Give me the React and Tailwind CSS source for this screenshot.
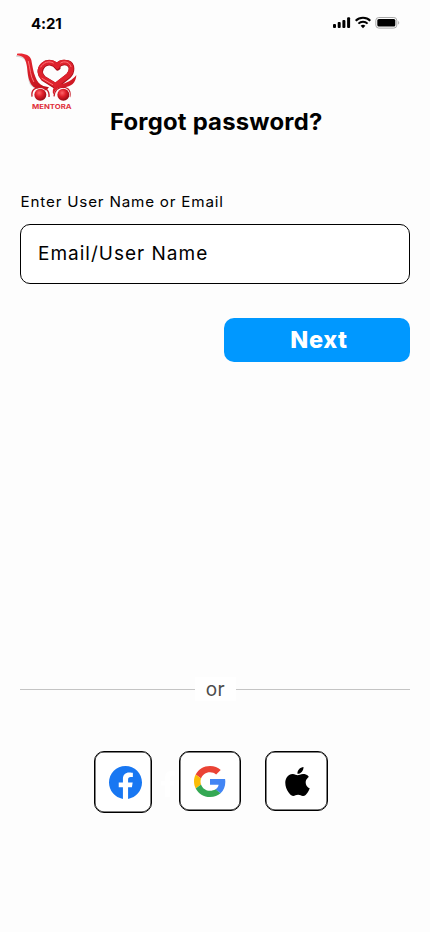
function Logo() {
  return (
    <svg viewBox="48 36 186 180" className="h-[60px] w-[62px] shrink-0" fill="none">
      <defs>
        <linearGradient id="red" x1="0" y1="0" x2="1" y2="1">
          <stop offset="0" stopColor="#ef2b35" />
          <stop offset="1" stopColor="#b90d18" />
        </linearGradient>
        <radialGradient id="wheel" cx=".4" cy=".35" r=".7">
          <stop offset="0" stopColor="#ff6468" />
          <stop offset=".45" stopColor="#df1f29" />
          <stop offset="1" stopColor="#8f0711" />
        </radialGradient>
      </defs>
      <path d="M51 42C70 41 86 44 90 57C95 78 90 92 100 110C108 124 116 131 128 139L145 143L139 149C116 145 96 141 91 126C84 107 88 87 82 66C78 52 67 47 51 46Z" fill="#8e8585" opacity=".3" transform="translate(-3 4)" />
      <path d="M51 41C72 39 90 45 94 60C98 80 99 94 106 110C111 124 118 132 130 138L147 142L139 151C112 149 96 143 90 126C81 107 84 87 78 67C75 53 67 48 51 46Z" fill="url(#red)" />
      <path d="M173 83C163 66 142 64 130 75C116 89 120 105 130 115L167 138L205 108C218 95 218 75 203 69C189 65 179 69 171 78" stroke="#a90d19" strokeWidth="17" strokeLinecap="round" strokeLinejoin="round" />
      <path d="M172 80C162 65 141 63 129 74C115 87 119 103 129 114L166 136L205 106C217 94 217 74 202 68C189 64 179 68 171 77" stroke="#de222d" strokeWidth="14" strokeLinecap="round" strokeLinejoin="round" />
      <path d="M160 69C147 61 130 67 122 81M182 69C193 61 210 67 213 80M85 64C91 87 91 109 101 125M126 115L158 134" stroke="#ff7479" strokeWidth="3" strokeLinecap="round" />
      <path d="M229 105C228 128 214 141 190 142C174 141 166 148 160 164C155 148 162 137 178 133C201 130 216 121 229 105Z" fill="url(#red)" />
      <path d="M96 170C93 150 105 142 120 142C137 142 149 151 147 171M162 169C164 149 175 142 190 142C206 143 213 153 209 171" stroke="#c71925" strokeWidth="4" />
      <circle cx="121" cy="164" r="20" fill="white" />
      <circle cx="190" cy="164" r="20" fill="white" />
      <circle cx="121" cy="164" r="18" fill="url(#wheel)" />
      <circle cx="190" cy="164" r="18" fill="url(#wheel)" />
      <text x="96" y="207" textLength="119" lengthAdjust="spacingAndGlyphs" fill="#e0303b" fontSize="20" fontWeight="700" fontFamily="Inter, sans-serif">MENTORA</text>
    </svg>
  );
}

function StatusIcons() {
  return (
    <svg viewBox="0 0 68 14" className="-mt-px h-[14px] w-[68px]">
      <rect x="0" y="8" width="3" height="4" rx="1" />
      <rect x="4.7" y="6" width="3" height="6" rx="1" />
      <rect x="9.4" y="4" width="3" height="8" rx="1" />
      <rect x="14.1" y="1.3" width="3" height="10.7" rx="1" />
      <g fill="none" stroke="black" strokeWidth="2">
        <path d="M22.7 4.8C26.7 .8 33.3 .8 37.3 4.8" />
        <path d="M25.4 7.6C28 5.1 32 5.1 34.6 7.6" />
      </g>
      <path d="M27.6 9.8Q30 7.8 32.4 9.8L30 12.2Z" />
      <rect x="42.8" y="1.5" width="21" height="10.6" rx="3" fill="none" stroke="#a8a8a8" />
      <rect x="44.3" y="3" width="18" height="7.6" rx="1.5" />
      <path d="M65.2 5v3.6c1.4-.5 1.4-3.1 0-3.6Z" fill="#a8a8a8" />
    </svg>
  );
}

function Facebook() {
  return (
    <svg viewBox="0 0 24 24" className="ml-[4px] h-[33px] w-[33px]" fill="#1877f2">
      <path d="M24 12.073c0-6.627-5.373-12-12-12s-12 5.373-12 12c0 5.99 4.388 10.954 10.125 11.854v-8.385H7.078v-3.47h3.047V9.43c0-3.007 1.792-4.669 4.533-4.669 1.312 0 2.686.235 2.686.235v2.953H15.83c-1.491 0-1.956.925-1.956 1.874v2.25h3.328l-.532 3.47h-2.796v8.385C19.612 23.027 24 18.062 24 12.073z" />
    </svg>
  );
}

function Google() {
  return (
    <svg viewBox="0 0 48 48" preserveAspectRatio="none" className="h-[31px] w-[32px]">
      <path fill="#EA4335" d="M24 9.5c3.54 0 6.71 1.22 9.21 3.6l6.85-6.85C35.9 2.38 30.47 0 24 0 14.62 0 6.51 5.38 2.56 13.22l7.98 6.19C12.43 13.72 17.74 9.5 24 9.5z" />
      <path fill="#4285F4" d="M46.98 24.55c0-1.57-.15-3.09-.38-4.55H24v9.02h12.94c-.58 2.96-2.26 5.48-4.78 7.18l7.73 6c4.51-4.18 7.09-10.36 7.09-17.65z" />
      <path fill="#FBBC05" d="M10.53 28.59c-.48-1.45-.76-2.99-.76-4.59s.27-3.14.76-4.59l-7.98-6.19C.92 16.46 0 20.12 0 24c0 3.88.92 7.54 2.56 10.78l7.97-6.19z" />
      <path fill="#34A853" d="M24 48c6.48 0 11.93-2.13 15.89-5.81l-7.73-6c-2.15 1.45-4.92 2.3-8.16 2.3-6.26 0-11.57-4.22-13.47-9.91l-7.98 6.19C6.51 42.62 14.62 48 24 48z" />
    </svg>
  );
}

function Apple() {
  return (
    <svg viewBox="2 0 20 24" preserveAspectRatio="none" className="ml-[2px] h-[29px] w-[25px]">
      <path d="M12.152 6.896c-.948 0-2.415-1.078-3.96-1.04-2.04.027-3.91 1.183-4.961 3.014-2.117 3.675-.546 9.103 1.519 12.09 1.013 1.454 2.208 3.09 3.792 3.039 1.52-.065 2.09-.987 3.935-.987 1.831 0 2.35.987 3.96.948 1.637-.026 2.676-1.48 3.676-2.948 1.156-1.688 1.636-3.325 1.662-3.415-.039-.013-3.182-1.221-3.22-4.857-.026-3.04 2.48-4.494 2.597-4.559-1.429-2.09-3.623-2.324-4.39-2.376-2-.156-3.675 1.09-4.61 1.09zM15.53 3.83c.843-1.012 1.4-2.427 1.245-3.83-1.207.052-2.662.805-3.532 1.818-.78.896-1.454 2.338-1.273 3.714 1.338.104 2.715-.688 3.559-1.701" />
    </svg>
  );
}

export default function App() {
  return (
    <main className="flex h-[932px] w-[430px] flex-col overflow-hidden bg-[#fdfdfd] font-['Inter',sans-serif] text-black">
      <header className="flex h-[46px] items-center justify-between pt-px pr-[29px] pl-[31px]">
        <span className="text-[15px] leading-5 font-bold tracking-[-0.1px]">4:21</span>
        <StatusIcons />
      </header>
      <div className="flex h-[90px] items-start pt-[6px] pl-[16px]">
        <Logo />
        <h1 className="mt-[56px] ml-[32px] origin-left scale-x-[1.06] text-[22.5px] leading-7 font-bold whitespace-nowrap tracking-[0.2px]">Forgot password?</h1>
      </div>
      <form className="flex flex-col px-5 pt-[56px]" onSubmit={(e) => e.preventDefault()}>
        <label htmlFor="user" className="origin-left scale-x-[1.05] pl-[0.6px] text-[14.5px] leading-5 tracking-[0.75px]">Enter User Name or Email</label>
        <input id="user" placeholder="Email/User Name" className="mt-[12px] h-[60px] rounded-[10px] border border-black bg-white pb-[2px] pl-[17px] text-[19px] tracking-[1px] outline-none placeholder:text-black" />
        <button className="mt-[34px] h-[44px] w-[186px] self-end rounded-[10px] bg-[#0098ff] pl-[4px] text-[23.5px] font-extrabold tracking-[0.6px] text-white">Next</button>
      </form>
      <div className="mt-[315px] flex h-[24px] items-center px-5">
        <div className="h-px flex-1 bg-[#c4c4c4]" />
        <span className="h-[24px] w-[41px] bg-white pt-px text-center text-[19px] leading-[24px] tracking-[0.6px] text-[#4c4c4c]">or</span>
        <div className="h-px w-[174px] bg-[#c4c4c4]" />
      </div>
      <div className="mt-[50px] flex items-start pl-[94px]">
        <button aria-label="Facebook" className="flex h-[62px] w-[58px] items-center justify-center rounded-[10px] border border-black bg-white shadow-[inset_0_0_0_0.5px_#000]"><Facebook /></button>
        <svg viewBox="7 4.7 10.4 19.3" preserveAspectRatio="none" className="mt-[20px] mr-[4px] ml-[9px] h-[26px] w-[14px]" fill="white"><path d="M10.125 24v-8.5H7.078v-3.47h3.047V9.43c0-3.007 1.792-4.669 4.533-4.669l2.686.235v2.953H15.83c-1.491 0-1.956.925-1.956 1.874v2.25h3.328l-.532 3.47h-2.796V24z" /></svg>
        <button aria-label="Google" className="flex h-[60px] w-[62px] items-center justify-center rounded-[10px] border border-black bg-white shadow-[inset_0_0_0_0.5px_#000]"><Google /></button>
        <button aria-label="Apple" className="ml-[24px] flex h-[60px] w-[63px] items-center justify-center rounded-[10px] border border-black bg-white shadow-[inset_0_0_0_0.5px_#000]"><Apple /></button>
      </div>
    </main>
  );
}
